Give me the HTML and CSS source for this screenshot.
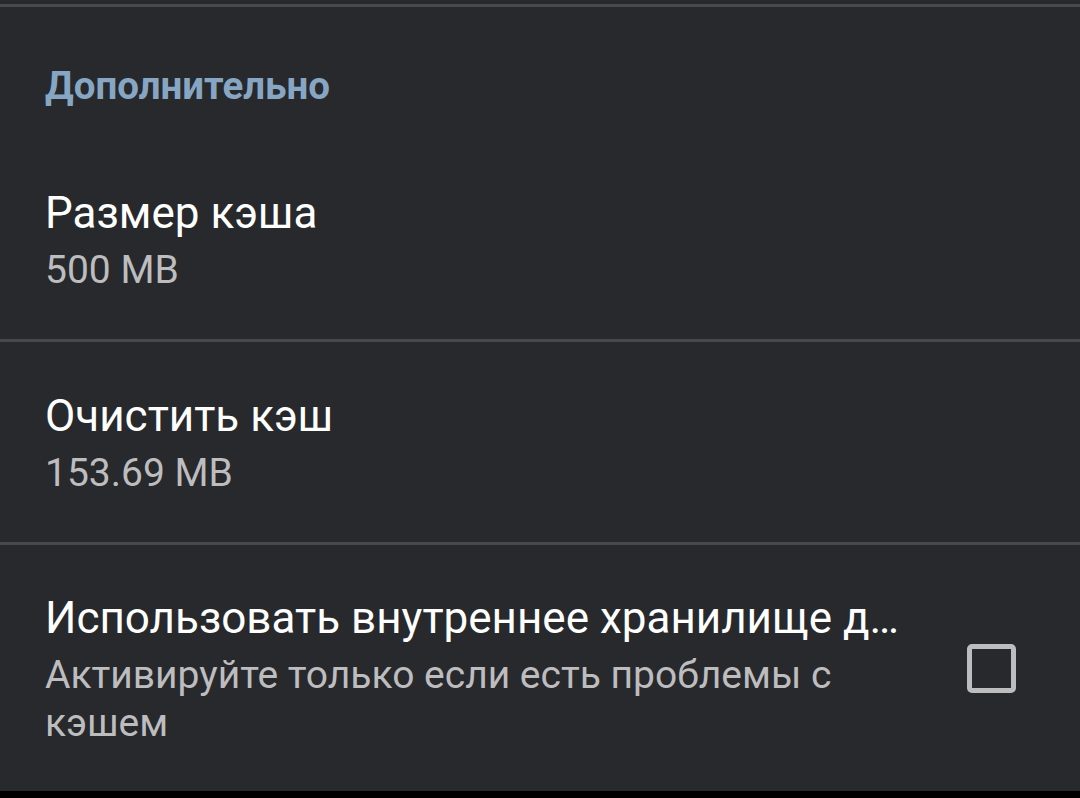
FILE: index.html
```html
<!DOCTYPE html>
<html lang="ru">
<head>
<meta charset="utf-8">
<link rel="stylesheet" href="styles.css">
</head>
<body>
<div class="screen">
  <div class="divider top-divider"></div>
  <div class="category">Дополнительно</div>
  <div class="pref">
    <div class="pref-text">
      <div class="pref-title">Размер кэша</div>
      <div class="pref-summary">500 MB</div>
    </div>
  </div>
  <div class="divider"></div>
  <div class="pref">
    <div class="pref-text">
      <div class="pref-title">Очистить кэш</div>
      <div class="pref-summary">153.69 MB</div>
    </div>
  </div>
  <div class="divider"></div>
  <div class="pref pref-check">
    <div class="pref-text">
      <div class="pref-title">Использовать внутреннее хранилище для кэша</div>
      <div class="pref-summary">Активируйте только если есть проблемы с кэшем</div>
    </div>
    <div class="checkbox"></div>
  </div>
</div>
</body>
</html>
```

FILE: styles.css
```css
html, body {
  margin: 0;
  padding: 0;
}
body {
  width: 1080px;
  height: 798px;
  background: #000000;
  font-family: Roboto, "Noto Sans", "Liberation Sans", sans-serif;
  overflow: hidden;
}
.screen {
  height: 791px;
  background: #28292d;
  display: flex;
  flex-direction: column;
}
.divider {
  height: 3px;
  background: #48494d;
  flex: none;
}
.top-divider {
  margin-top: 4px;
}
.category {
  height: 132px;
  box-sizing: border-box;
  padding: 57px 45px 0;
  font-size: 38.5px;
  line-height: 44px;
  font-weight: 700;
  color: #87a6c3;
}
.pref {
  display: flex;
  align-items: center;
  min-height: 200px;
  box-sizing: border-box;
  padding: 42px 64px 42px 45px;
}
.pref-text {
  flex: 1;
  min-width: 0;
}
.pref-title {
  font-size: 44px;
  line-height: 58px;
  color: #ffffff;
  white-space: nowrap;
  overflow: hidden;
  text-overflow: ellipsis;
  margin-bottom: 4px;
}
.pref-summary {
  font-size: 39px;
  line-height: 48px;
  color: #bdbdbf;
}
.pref-check {
  flex: 1;
}
.checkbox {
  flex: none;
  width: 49px;
  height: 49px;
  box-sizing: border-box;
  border: 5px solid #bdbdbf;
  border-radius: 5px;
  margin-left: 58px;
}
```
